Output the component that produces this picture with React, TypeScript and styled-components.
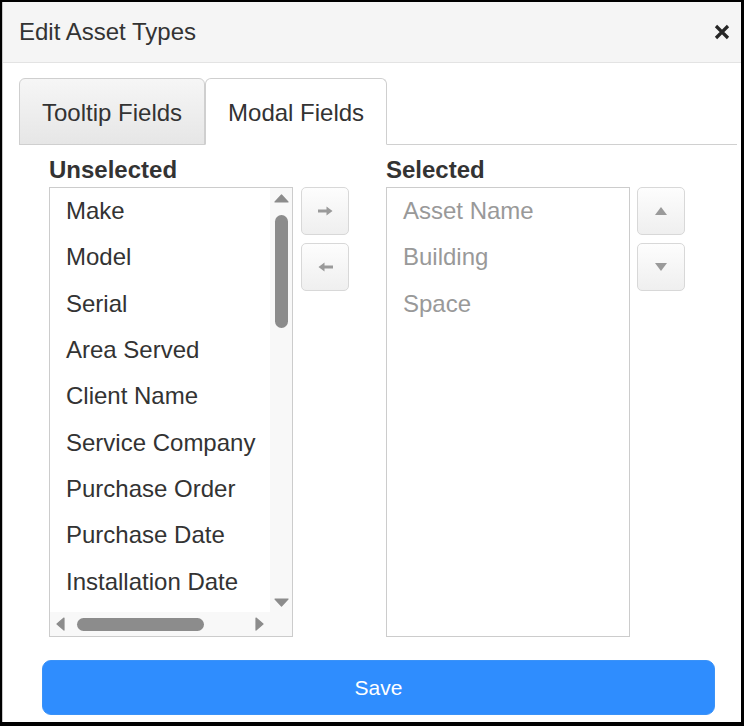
import React from "react";
import styled, { createGlobalStyle } from "styled-components";

const GlobalStyle = createGlobalStyle`
  html, body { margin: 0; padding: 0; background: #000; }
  body { font-family: "Liberation Sans", Arial, sans-serif; color: #333; }
  * { box-sizing: border-box; }
`;

const Frame = styled.div`
  width: 744px;
  height: 726px;
  padding: 2px 3px 4px 2px;
  background: #000;
`;

const Modal = styled.div`
  height: 100%;
  background: #fff;
  border-left: 1px solid #c8c8c8;
  display: flex;
  flex-direction: column;
`;

const Header = styled.div`
  height: 61px;
  flex: none;
  background: #f5f5f5;
  border-bottom: 1px solid #e3e3e3;
  display: flex;
  align-items: center;
  justify-content: space-between;
  padding: 0 10px 0 16px;
`;

const Title = styled.h4`
  margin: 0;
  font-size: 24px;
  font-weight: normal;
  color: #333;
  line-height: 1;
`;

const Close = styled.button`
  border: 0;
  background: none;
  padding: 0;
  width: 18px;
  height: 18px;
  display: flex;
  align-items: center;
  justify-content: center;
  cursor: pointer;
`;

const Body = styled.div`
  padding: 15px 4px 0 16px;
`;

const TabBar = styled.div`
  display: flex;
  border-bottom: 1px solid #d0d0d0;
  height: 67px;
`;

const Tab = styled.div<{ $active?: boolean }>`
  height: 67px;
  padding: 2px 22px 0;
  display: flex;
  align-items: center;
  font-size: 24px;
  color: #333;
  border: 1px solid #cfcfcf;
  border-bottom-color: ${(p) => (p.$active ? "#fff" : "#cfcfcf")};
  border-radius: 6px 6px 0 0;
  background: ${(p) =>
    p.$active ? "#fff" : "linear-gradient(#f6f6f6, #e6e6e6)"};
  margin-bottom: -1px;
`;

const Picker = styled.div`
  display: grid;
  grid-template-columns: 244px 93px 244px 55px;
  grid-template-rows: 42px 450px;
  margin-left: 30px;
`;

const Label = styled.div<{ $col: number }>`
  grid-column: ${(p) => p.$col};
  grid-row: 1;
  font-weight: bold;
  font-size: 24px;
  line-height: 26px;
  padding-top: 12px;
  color: #333;
`;

const ListBox = styled.div<{ $col: number }>`
  grid-column: ${(p) => p.$col};
  grid-row: 2;
  border: 1px solid #cccccc;
  background: #fff;
  overflow: hidden;
`;

const ScrollFrame = styled.div`
  height: 100%;
  display: grid;
  grid-template-columns: 1fr 22px;
  grid-template-rows: 1fr 24px;
`;

const Viewport = styled.div`
  overflow: hidden;
`;

const Item = styled.div<{ $muted?: boolean }>`
  height: 46.3px;
  display: flex;
  align-items: center;
  padding-left: 16px;
  font-size: 24px;
  white-space: nowrap;
  color: ${(p) => (p.$muted ? "#999" : "#333")};
`;

const VTrack = styled.div`
  background: #f8f8f8;
  display: flex;
  flex-direction: column;
  align-items: center;
`;

const HTrack = styled.div`
  background: #f8f8f8;
  display: flex;
  align-items: center;
`;

const Corner = styled.div`
  background: #f8f8f8;
`;

const SBtn = styled.div<{ $w: number; $h: number }>`
  width: ${(p) => p.$w}px;
  height: ${(p) => p.$h}px;
  flex: none;
  display: flex;
  align-items: center;
  justify-content: center;
`;

const VThumb = styled.div`
  width: 13px;
  height: 113px;
  margin-top: 7px;
  border-radius: 7px;
  background: #8c8c8c;
`;

const Spacer = styled.div`
  flex: 1;
`;

const HThumb = styled.div`
  width: 127px;
  height: 13px;
  margin-left: 7px;
  border-radius: 7px;
  background: #8c8c8c;
`;

const ButtonStack = styled.div<{ $col: number }>`
  grid-column: ${(p) => p.$col};
  grid-row: 2;
  display: flex;
  flex-direction: column;
  gap: 8px;
  padding-left: ${(p) => (p.$col === 2 ? 8 : 7)}px;
`;

const MoveButton = styled.button`
  width: 48px;
  height: 48px;
  padding: 0;
  border: 1px solid #d8d8d8;
  border-radius: 5px;
  background: linear-gradient(#fdfdfd, #efefef);
  display: flex;
  align-items: center;
  justify-content: center;
  cursor: pointer;
`;

const Footer = styled.div`
  padding: 23px 26px 0 39px;
`;

const SaveButton = styled.button`
  width: 100%;
  height: 55px;
  border: 1px solid #3a92f8;
  border-radius: 9px;
  background: #2f8dfe;
  color: #fff;
  font-family: "Liberation Sans", Arial, sans-serif;
  font-size: 21px;
  cursor: pointer;
`;

const unselected = [
  "Make",
  "Model",
  "Serial",
  "Area Served",
  "Client Name",
  "Service Company",
  "Purchase Order",
  "Purchase Date",
  "Installation Date",
];

const selected = ["Asset Name", "Building", "Space"];

const Tri = ({ dir }: { dir: "up" | "down" | "left" | "right" }) => {
  const paths: Record<string, string> = {
    up: "M1 8 L7.5 1 L14 8 Z",
    down: "M1 1 L7.5 8 L14 1 Z",
    left: "M8 1 L1 7 L8 13 Z",
    right: "M1 1 L8 7 L1 13 Z",
  };
  const vert = dir === "up" || dir === "down";
  return (
    <svg width={vert ? 15 : 9} height={vert ? 9 : 14} viewBox={vert ? "0 0 15 9" : "0 0 9 14"}>
      <path d={paths[dir]} fill="#8c8c8c" stroke="#8c8c8c" strokeWidth="1.2" strokeLinejoin="round" />
    </svg>
  );
};

const Arrow = ({ dir }: { dir: "left" | "right" }) => (
  <svg width="15" height="10" viewBox="0 0 15 10">
    <path
      d={
        dir === "right"
          ? "M0 3.6 H8.5 V0.5 L14.5 5 L8.5 9.5 V6.4 H0 Z"
          : "M15 3.6 H6.5 V0.5 L0.5 5 L6.5 9.5 V6.4 H15 Z"
      }
      fill="#9a9a9a"
    />
  </svg>
);

const SmallTri = ({ dir }: { dir: "up" | "down" }) => (
  <svg width="12" height="8" viewBox="0 0 12 8">
    <path d={dir === "up" ? "M0 8 L6 0 L12 8 Z" : "M0 0 L6 8 L12 0 Z"} fill="#9a9a9a" />
  </svg>
);

export default function App() {
  return (
    <>
      <GlobalStyle />
      <Frame>
        <Modal>
          <Header>
            <Title>Edit Asset Types</Title>
            <Close aria-label="Close">
              <svg width="16" height="16" viewBox="0 0 16 16">
                <path d="M2 2 L14 14 M14 2 L2 14" stroke="#262626" strokeWidth="3.2" />
              </svg>
            </Close>
          </Header>
          <Body>
            <TabBar>
              <Tab>Tooltip Fields</Tab>
              <Tab $active>Modal Fields</Tab>
            </TabBar>
            <Picker>
              <Label $col={1}>Unselected</Label>
              <Label $col={3}>Selected</Label>
              <ListBox $col={1}>
                <ScrollFrame>
                  <Viewport>
                    {unselected.map((t) => (
                      <Item key={t}>{t}</Item>
                    ))}
                  </Viewport>
                  <VTrack>
                    <SBtn $w={22} $h={20}>
                      <Tri dir="up" />
                    </SBtn>
                    <VThumb />
                    <Spacer />
                    <SBtn $w={22} $h={20}>
                      <Tri dir="down" />
                    </SBtn>
                  </VTrack>
                  <HTrack>
                    <SBtn $w={20} $h={24}>
                      <Tri dir="left" />
                    </SBtn>
                    <HThumb />
                    <Spacer />
                    <SBtn $w={22} $h={24}>
                      <Tri dir="right" />
                    </SBtn>
                  </HTrack>
                  <Corner />
                </ScrollFrame>
              </ListBox>
              <ButtonStack $col={2}>
                <MoveButton aria-label="Add">
                  <Arrow dir="right" />
                </MoveButton>
                <MoveButton aria-label="Remove">
                  <Arrow dir="left" />
                </MoveButton>
              </ButtonStack>
              <ListBox $col={3}>
                {selected.map((t) => (
                  <Item key={t} $muted>
                    {t}
                  </Item>
                ))}
              </ListBox>
              <ButtonStack $col={4}>
                <MoveButton aria-label="Move up">
                  <SmallTri dir="up" />
                </MoveButton>
                <MoveButton aria-label="Move down">
                  <SmallTri dir="down" />
                </MoveButton>
              </ButtonStack>
            </Picker>
          </Body>
          <Footer>
            <SaveButton>Save</SaveButton>
          </Footer>
        </Modal>
      </Frame>
    </>
  );
}
